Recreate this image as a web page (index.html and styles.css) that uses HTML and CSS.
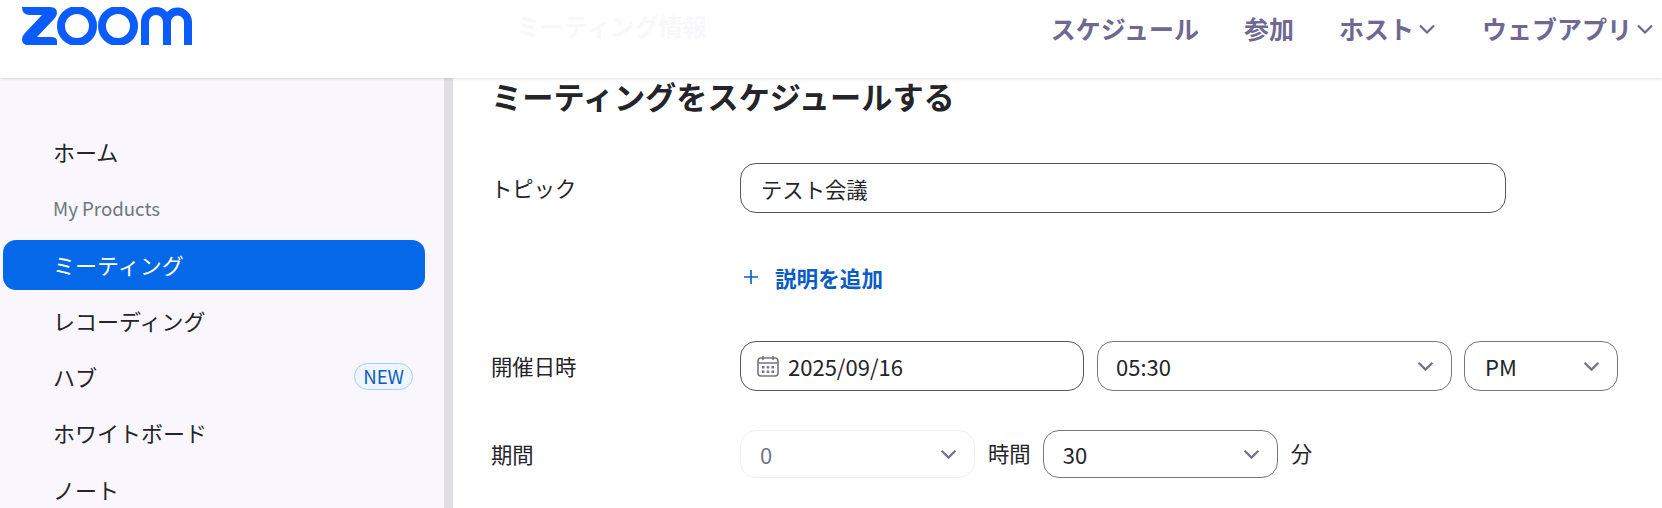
FILE: index.html
```html
<!DOCTYPE html>
<html lang="ja">
<head>
<meta charset="utf-8">
<title>ミーティングをスケジュールする</title>
<link rel="stylesheet" href="styles.css">
</head>
<body>
<header class="topbar">
  <svg class="logo" viewBox="0 0 170 38" aria-label="zoom">
    <path class="logo-z" d="M3 0H28Q35 0 35 6Q35 9 32 12L15 30H29Q35 30 35 34V38H6Q0 38 0 32Q0 29 3 26L20 8H8Q0 8 0 0Z"/>
    <g class="logo-stroke">
      <circle cx="55" cy="19" r="16"/>
      <circle cx="96" cy="19" r="16"/>
      <path d="M123 38V15a11 11 0 0 1 22 0V38M145 15a10.500 10.500 0 0 1 21 0V38"/>
    </g>
  </svg>
  <span class="ghost-title">ミーティング情報</span>
  <nav class="topnav">
    <a class="topnav-item">スケジュール</a>
    <a class="topnav-item">参加</a>
    <a class="topnav-item">ホスト<svg class="topnav-chev" viewBox="0 0 16 10"><path d="M1 1.500l7 7 7-7"/></svg></a>
    <a class="topnav-item item-apps">ウェブアプリ<svg class="topnav-chev" viewBox="0 0 16 10"><path d="M1 1.500l7 7 7-7"/></svg></a>
  </nav>
</header>
<div class="layout">
  <aside class="sidebar">
    <a class="side-item">ホーム</a>
    <a class="side-item side-muted">My Products</a>
    <a class="side-item side-active">ミーティング</a>
    <a class="side-item">レコーディング</a>
    <a class="side-item">ハブ<span class="badge">NEW</span></a>
    <a class="side-item">ホワイトボード</a>
    <a class="side-item">ノート</a>
  </aside>
  <div class="scrolltrack"></div>
  <main class="content">
    <h1 class="page-title">ミーティングをスケジュールする</h1>
    <div class="row row-topic">
      <div class="label">トピック</div>
      <div class="field field-topic">テスト会議</div>
    </div>
    <div class="row row-desc">
      <div class="label"></div>
      <a class="add-link"><svg class="plus" viewBox="0 0 16 16"><path d="M8 1V15M1 8H15"/></svg>説明を追加</a>
    </div>
    <div class="row row-date">
      <div class="label">開催日時</div>
      <div class="field field-date">
        <svg class="cal" viewBox="0 0 22 22">
          <rect x="1" y="3" width="20" height="18" rx="3"/>
          <path d="M1 8H21M6 1V5M16 1V5"/>
          <g class="cal-dots">
            <rect x="5" y="11" width="2.500" height="2.500"/><rect x="9.700" y="11" width="2.500" height="2.500"/><rect x="14.500" y="11" width="2.500" height="2.500"/>
            <rect x="5" y="15.500" width="2.500" height="2.500"/><rect x="9.700" y="15.500" width="2.500" height="2.500"/><rect x="14.500" y="15.500" width="2.500" height="2.500"/>
          </g>
        </svg>
        <span>2025/09/16</span>
      </div>
      <div class="field field-select field-time">05:30<svg class="chev" viewBox="0 0 16 10"><path d="M1.500 1.500L8 8l6.500-6.500"/></svg></div>
      <div class="field field-select field-ampm">PM<svg class="chev" viewBox="0 0 16 10"><path d="M1.500 1.500L8 8l6.500-6.500"/></svg></div>
    </div>
    <div class="row row-duration">
      <div class="label">期間</div>
      <div class="field field-select field-hours">0<svg class="chev" viewBox="0 0 16 10"><path d="M1.500 1.500L8 8l6.500-6.500"/></svg></div>
      <span class="unit unit-hours">時間</span>
      <div class="field field-select field-mins">30<svg class="chev" viewBox="0 0 16 10"><path d="M1.500 1.500L8 8l6.500-6.500"/></svg></div>
      <span class="unit unit-mins">分</span>
    </div>
  </main>
</div>
</body>
</html>
```
FILE: styles.css
```css
* { box-sizing: border-box; }
html, body { margin: 0; height: 508px; overflow: hidden; background: #fff; }
body {
  font-family: "Noto Sans CJK JP", "Noto Sans", sans-serif;
  font-size: 21.33px;
  color: #242429;
}
.topbar {
  position: relative;
  z-index: 2;
  display: flex;
  align-items: flex-start;
  height: 78px;
  padding-left: 22px;
  background: #fff;
  box-shadow: 0 1px 3px rgba(0, 0, 0, .12);
}
.logo { width: 170px; height: 38px; margin-top: 7px; flex: none; }
.logo-z { fill: #0b5cff; }
.logo-stroke { fill: none; stroke: #0b5cff; stroke-width: 8; }
.ghost-title {
  margin: 9px 0 0 324px;
  font-size: 24px;
  line-height: 34px;
  color: #f8f7fb;
  font-weight: 700;
}
.topnav {
  display: flex;
  align-items: center;
  margin-left: auto;
  height: 55px;
  padding-right: 9px;
  gap: 45px;
}
.topnav-item {
  display: flex;
  align-items: center;
  font-size: 25px;
  font-weight: 700;
  color: #6e6893;
  line-height: 34px;
}
.item-apps { margin-left: 2px; }
.topnav-chev { width: 16px; height: 10px; margin-left: 5px; margin-top: 3px; fill: none; stroke: #6e6893; stroke-width: 2.200; }
.layout { display: flex; height: 430px; }
.sidebar {
  flex: none;
  width: 444px;
  height: 100%;
  padding: 49px 19px 0 3px;
  background: #f9f7fd;
  display: flex;
  flex-direction: column;
  gap: 6.3px;
  overflow: hidden;
}
.side-item {
  flex: none;
  display: flex;
  align-items: center;
  height: 50px;
  padding: 0 12px 2px 50px;
  border-radius: 13px;
  font-size: 22px;
  color: #242429;
}
.side-muted { font-size: 18.67px; color: #6e7680; }
.side-active { background: #0568e8; color: #fff; }
.badge {
  margin-left: auto;
  height: 27px;
  padding: 0 8px;
  border: 1px solid #a9cdfc;
  border-radius: 14px;
  background: #eef5ff;
  color: #0b5cc4;
  font-size: 18.67px;
  line-height: 24px;
}
.scrolltrack { flex: none; width: 9px; background: #e0dfe3; }
.content { flex: 1; padding-left: 38px; min-width: 0; }
.page-title { margin: -1px 0 0; font-size: 31.2px; line-height: 38px; font-weight: 700; }
.row { display: flex; align-items: center; }
.row-topic { margin-top: 48px; }
.row-desc { margin-top: 40px; height: 50px; }
.row-date { margin-top: 38px; }
.row-duration { margin-top: 39px; }
.label { flex: none; width: 249px; margin-top: -2px; }
.field {
  display: flex;
  align-items: center;
  flex: none;
  height: 50px;
  padding-left: 19px;
  border: 1px solid #555;
  border-radius: 16px;
  background: #fff;
  font-size: 22px;
}
.field-topic { width: 766px; padding-left: 20px; font-size: 21.33px; }
.field-date { width: 344px; padding-left: 16px; }
.cal { width: 22px; height: 22px; margin-right: 9px; fill: none; stroke: #747487; stroke-width: 1.600; }
.cal-dots { fill: #747487; stroke: none; }
.field-select { justify-content: space-between; padding-right: 17px; border-color: #777; }
.chev { width: 17px; height: 11px; fill: none; stroke: #747487; stroke-width: 2.200; }
.field-time { width: 355px; margin-left: 13px; padding-left: 18px; }
.field-ampm { width: 154px; margin-left: 12px; padding-left: 20px; }
.field-hours, .field-mins { height: 48px; }
.field-hours { width: 235px; border-color: #f1f0f7; color: #747487; }
.field-mins { width: 235px; }
.unit { flex: none; }
.unit-hours { margin: 0 12px 4px 13px; }
.unit-mins { margin: 0 0 4px 13px; }
.add-link { display: flex; align-items: center; color: #0b5cc4; font-weight: 700; font-size: 21.6px; margin-top: -2px; }
.plus { width: 16px; height: 16px; margin: 0 16px 0 3px; fill: none; stroke: #0b5cc4; stroke-width: 1.600; }
```
